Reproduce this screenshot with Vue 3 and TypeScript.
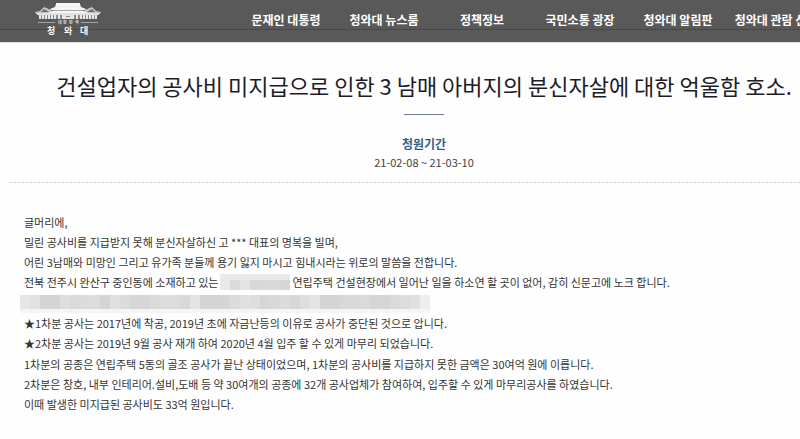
<script setup lang="ts">
const menu: string[] = ['문재인 대통령', '청와대 뉴스룸', '정책정보', '국민소통 광장', '청와대 알림판', '청와대 관람 신청']

const openingLines: string[] = [
  '글머리에,',
  '밀린 공사비를 지급받지 못해 분신자살하신 고 *** 대표의 명복을 빌며,',
  '어린 3남매와 미망인 그리고 유가족 분들께 용기 잃지 마시고 힘내시라는 위로의 말씀을 전합니다.',
]

const stageLines: string[] = [
  '★1차분 공사는 2017년에 착공, 2019년 초에 자금난등의 이유로 공사가 중단된 것으로 압니다.',
  '★2차분 공사는 2019년 9월 공사 재개 하여 2020년 4월 입주 할 수 있게 마무리 되었습니다.',
]

const costLines: string[] = [
  '1차분의 공종은 연립주택 5동의 골조 공사가 끝난 상태이었으며, 1차분의 공사비를 지급하지 못한 금액은 30여억 원에 이릅니다.',
  '2차분은 창호, 내부 인테리어.설비,도배 등 약 30여개의 공종에 32개 공사업체가 참여하여, 입주할 수 있게 마무리공사를 하였습니다.',
  '이때 발생한 미지급된 공사비도 33억 원입니다.',
]

// Grey levels of the mosaic tiles that hide private details
const nameTiles: number[] = [232, 218, 228, 216, 216, 217, 214]
const lineTiles: number[] = [
  230, 225, 212, 212, 222, 218, 219, 220, 212, 224, 219, 214, 214, 218, 220, 220, 216, 228, 212, 212, 213,
  219, 224, 221, 214, 216, 219, 215, 222, 228, 212, 212, 216, 217, 218, 213, 213, 218, 220, 224, 238,
]

const grey = (level: number): string => `rgb(${level}, ${level}, ${level})`
</script>

<template>
  <div class="page">
    <header class="header">
      <a class="logo" href="#" aria-label="대한민국 청와대">
        <svg viewBox="0 0 66 34" width="66" height="34" aria-hidden="true">
          <path d="M21 1h24v1l1 3 5 2-1 1H16l-1-1 5-2 1-3z" fill="#f4f4f4" />
          <path d="M18 8h30v2H18z" fill="#a8a8a8" />
          <path d="M0 10l5-1 4-4 7 3 4 3v1H1zM66 10l-5-1-4-4-7 3-4 3v1h19z" fill="#c4c4c4" />
          <path d="M6 10l3-3 5 3zM60 10l-3-3-5 3z" fill="#6c6c6c" />
          <path d="M13 11l5-2h30l5 2v2H13z" fill="#f6f6f6" />
          <path d="M2 11h62v2H2z" fill="#e0e0e0" />
          <path d="M4 13h58v4H4z" fill="#8a8a8a" />
          <path d="M5 13v4M8 13v4M11 13v4M14 13v4M17 13v4M20 13v4M24 13v4M28 13v4M38 13v4M42 13v4M46 13v4M49 13v4M52 13v4M55 13v4M58 13v4M61 13v4" stroke="#fff" stroke-width="1.6" />
          <path d="M29 13h8v4h-8z" fill="#e6e6e6" />
          <path d="M31 14h4v1h-4z" fill="#888" />
          <path d="M3 20h17v1H3zM46 20h17v1H46z" fill="#a5a5a5" />
          <text class="logo-country" x="23 28 34 40" y="22">대한민국</text>
          <text class="logo-name" x="12 29 45" y="32">청와대</text>
        </svg>
      </a>
      <nav class="menu" aria-label="주 메뉴">
        <a v-for="item in menu" :key="item" href="#">{{ item }}</a>
      </nav>
    </header>

    <main class="petition">
      <div class="summary">
        <h1>건설업자의 공사비 미지급으로 인한 3 남매 아버지의 분신자살에 대한 억울함 호소.</h1>
        <dl class="period">
          <dt>청원기간</dt>
          <dd>21-02-08 ~ 21-03-10</dd>
        </dl>
      </div>

      <article class="body">
        <div>
          <p v-for="line in openingLines" :key="line">{{ line }}</p>
          <p class="masked-line">
            <span>전북 전주시 완산구 중인동에 소재하고 있는</span>
            <span class="mosaic mosaic-name">
              <i v-for="(level, i) in nameTiles" :key="i" :style="{ backgroundColor: grey(level) }"></i>
            </span>
            <span>연립주택 건설현장에서 일어난 일을 하소연 할 곳이 없어, 감히 신문고에 노크 합니다.</span>
          </p>
        </div>
        <div class="mosaic mosaic-full">
          <i v-for="(level, i) in lineTiles" :key="i" :style="{ backgroundColor: grey(level) }"></i>
        </div>
        <div>
          <p v-for="line in stageLines" :key="line">{{ line }}</p>
        </div>
        <div>
          <p v-for="line in costLines" :key="line">{{ line }}</p>
        </div>
      </article>
    </main>
  </div>
</template>

<style>
body {
  margin: 0;
  background: #fefefe;
}
</style>

<style scoped>
.page {
  overflow: hidden;
  color: #333;
  font-family: 'Noto Sans CJK KR', 'Noto Sans', sans-serif;
}

.header {
  display: flex;
  align-items: flex-start;
  height: 42px;
  border-bottom: 1px solid #e2e2e2;
  background: linear-gradient(#595959 29px, #484848 29px, #484848 30px, #595959 30px);
}

.logo {
  flex: none;
  width: 202px;
  padding: 2px 0 0 35px;
}

.logo svg {
  display: block;
}

.logo-country {
  fill: #e0e0e0;
  font-size: 4px;
  font-weight: 700;
}

.logo-name {
  fill: #f6f6f6;
  font-size: 9px;
  font-weight: 700;
}

.menu {
  display: grid;
  flex: none;
  grid-template-columns: repeat(6, 98px);
}

.menu a {
  color: #fff;
  font-size: 12px;
  font-weight: 700;
  line-height: 40px;
  text-align: center;
  text-decoration: none;
  white-space: nowrap;
}

.petition {
  margin: 0 -38px 0 10px;
}

.summary {
  padding: 26px 0 12px;
  background: repeating-linear-gradient(90deg, #cdcdcd 0 2px, transparent 2px 4px) bottom / 100% 1px no-repeat;
  text-align: center;
}

h1 {
  margin: 0;
  color: #1c1c28;
  font-size: 22px;
  font-weight: 400;
  line-height: 32px;
  white-space: nowrap;
}

h1::after {
  display: block;
  width: 40px;
  height: 1px;
  margin: 13px auto 0;
  background: #6f7c8c;
  content: '';
}

.period {
  margin: 20px 0 0;
  line-height: 18px;
}

.period dt {
  color: #365c8a;
  font-size: 12px;
  font-weight: 700;
}

.period dd {
  margin: 0;
  color: #444;
  font-size: 11px;
}

.body {
  display: grid;
  gap: 1px;
  padding: 29px 14px;
  font-size: 11px;
  line-height: 20px;
}

p {
  margin: 0;
  white-space: nowrap;
}

.masked-line {
  display: flex;
  align-items: center;
  gap: 2px;
}

.mosaic {
  display: flex;
}

.mosaic i {
  flex: none;
  width: 10px;
}

.mosaic-name {
  height: 10px;
  border-top: 6px solid #e9e9e9;
}

.mosaic-full {
  width: 410px;
  height: 14px;
  margin: 2px 0 -1px -4px;
  border-bottom: 4px solid #f5f5f5;
}
</style>
